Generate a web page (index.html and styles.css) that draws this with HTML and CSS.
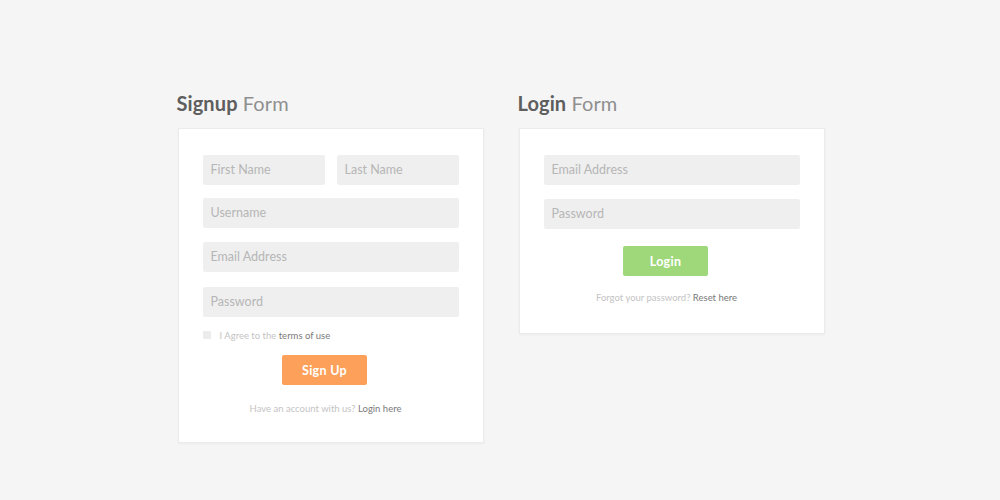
FILE: index.html
```html
<!DOCTYPE html>
<html lang="en">
<head>
<meta charset="utf-8">
<title>Signup and Login Forms</title>
<link rel="stylesheet" href="styles.css">
</head>
<body>
<main class="forms">
  <section class="form-block">
    <h2 class="form-title"><strong>Signup</strong> Form</h2>
    <div class="card card-signup">
      <div class="row">
        <div class="field">First Name</div>
        <div class="field">Last Name</div>
      </div>
      <div class="field gap-13">Username</div>
      <div class="field gap-14">Email Address</div>
      <div class="field gap-15">Password</div>
      <label class="agree"><span class="check"></span><span>I Agree to the <b>terms of use</b></span></label>
      <div class="actions"><button class="btn btn-orange">Sign Up</button></div>
      <p class="note">Have an account with us? <b>Login here</b></p>
    </div>
  </section>
  <section class="form-block">
    <h2 class="form-title"><strong>Login</strong> Form</h2>
    <div class="card card-login">
      <div class="field">Email Address</div>
      <div class="field gap-14">Password</div>
      <div class="actions"><button class="btn btn-green">Login</button></div>
      <p class="note">Forgot your password? <b>Reset here</b></p>
    </div>
  </section>
</main>
</body>
</html>
```
FILE: styles.css
```css
html, body {
  margin: 0;
  padding: 0;
  background: #f5f5f5;
  font-family: Lato, "Open Sans", "Liberation Sans", sans-serif;
  height: 100%;
}

.forms {
  display: flex;
  justify-content: center;
  gap: 35px;
  padding-top: 91px;
  padding-left: 2px;
}

.form-block {
  display: flex;
  flex-direction: column;
}

.form-title {
  margin: 0 0 13px -1px;
  font-size: 20px;
  line-height: 24px;
  font-weight: 400;
  letter-spacing: 0.1px;
  color: #8f8f8f;
}

.form-title strong {
  font-weight: 700;
  color: #5e5e5e;
}

.card {
  width: 256px;
  background: #fff;
  border: 1px solid #ebebeb;
  box-shadow: 0 1px 2px rgba(0, 0, 0, 0.04);
  padding: 26px 24px 0 24px;
  display: flex;
  flex-direction: column;
}

.card-signup { height: 287px; }
.card-login { height: 178px; }

.row {
  display: flex;
  gap: 12px;
}

.row .field { flex: 1; }

.field {
  height: 30px;
  line-height: 30px;
  background: #efefef;
  border-radius: 2px;
  padding: 0 8px;
  font-size: 12.5px;
  color: #b6b6b6;
  box-sizing: border-box;
}

.gap-13 { margin-top: 13px; }
.gap-14 { margin-top: 14px; }
.gap-15 { margin-top: 15px; }

.agree {
  display: flex;
  align-items: center;
  margin-top: 12px;
  font-size: 9.5px;
  color: #c4c4c4;
  height: 12px;
}

.agree b, .note b {
  font-weight: 400;
  color: #7a7a7a;
}

.check {
  width: 8px;
  height: 8px;
  background: #ececec;
  border-radius: 1px;
  margin-right: 9px;
}

.actions {
  display: flex;
  justify-content: center;
  padding-right: 12px;
}

.card-signup .actions { margin-top: 14px; }
.card-login .actions { margin-top: 17px; }

.btn {
  width: 85px;
  height: 30px;
  border: 0;
  border-radius: 2px;
  color: #fff;
  font-family: inherit;
  font-size: 12.5px;
  font-weight: 700;
  letter-spacing: 0.3px;
  padding: 0;
}

.btn-orange { background: #fda05a; }
.btn-green { background: #9ed87a; }

.note {
  margin: 0;
  text-align: center;
  padding-right: 10px;
  font-size: 9.5px;
  color: #c4c4c4;
}

.card-signup .note { margin-top: 18px; }
.card-login .note { margin-top: 16px; }
```
